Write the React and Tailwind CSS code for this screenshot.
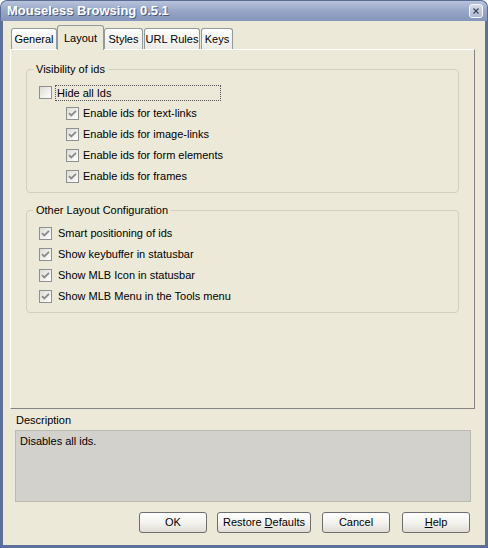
import React from "react";

function CheckBox({ checked }) {
  return (
    <span className="flex h-[13px] w-[13px] shrink-0 items-center justify-center border border-[#8f8f8f] bg-gradient-to-br from-[#dcdcd6] to-white">
      {checked && (
        <svg width="9" height="9" viewBox="0 0 9 9">
          <path d="M1 4.2 L3.3 6.5 L8 1.8" fill="none" stroke="#8a8a8a" strokeWidth="1.8" />
        </svg>
      )}
    </span>
  );
}

function Row({ label, checked, indent, focus }) {
  return (
    <div className={`flex h-[21px] items-center ${indent ? "pl-[39px]" : "pl-[12px]"}`}>
      <CheckBox checked={checked} />
      {focus ? (
        <span className="ml-[3px] w-[166px] border border-dotted border-[#555] pl-[1px] leading-[14px]">{label}</span>
      ) : (
        <span className={indent ? "ml-[4px]" : "ml-[6px]"}>{label}</span>
      )}
    </div>
  );
}

function Group({ title, children, className }) {
  return (
    <fieldset className={`mx-[15px] rounded-[4px] border border-[#d0d0bf] pb-[5px] ${className}`}>
      <legend className="ml-[6px] px-[3px] leading-[13px]">{title}</legend>
      <div className="pt-[6px]">{children}</div>
    </fieldset>
  );
}

function Tab({ label, active, w }) {
  return (
    <div
      className={`flex items-center justify-center rounded-t-[3px] border border-b-0 border-[#919b9c] bg-gradient-to-b from-white to-[#ecebe6] ${w} ${
        active ? "relative z-10 -mx-[1px] -mb-[1px] h-[25px] bg-none bg-[#ece9d8]" : "h-[21px]"
      }`}
    >
      {label}
    </div>
  );
}

function Button({ children, w }) {
  return (
    <div
      className={`flex h-[21px] items-center justify-center rounded-[3px] border border-[#6e6e6e] bg-gradient-to-b from-white via-[#f4f3ee] to-[#dedcd4] ${w}`}
    >
      {children}
    </div>
  );
}

export default function App() {
  return (
    <div className="flex h-[548px] w-[488px] flex-col text-[11px] text-black" style={{ fontFamily: '"Liberation Sans", Arial, sans-serif' }}>
      {/* title bar */}
      <div className="flex h-[21px] shrink-0 items-center justify-between rounded-t-[7px] border border-b-0 border-[#5a6b94] bg-gradient-to-b from-[#b8c3dc] via-[#97a6c7] to-[#8596bb] pl-[6px] pr-[4px]">
        <span className="text-[13px] font-bold text-white [text-shadow:1px_1px_0_#4a5a80]">Mouseless Browsing 0.5.1</span>
        <span className="flex h-[14px] w-[14px] items-center justify-center rounded-[3px] border border-[#f4f6fa] bg-gradient-to-b from-[#d7dde9] to-[#aeb9d1]">
          <svg width="6" height="6" viewBox="0 0 6 6">
            <path d="M0.5 0.5 L5.5 5.5 M5.5 0.5 L0.5 5.5" stroke="#3b4660" strokeWidth="1.2" />
          </svg>
        </span>
      </div>

      {/* body */}
      <div className="flex flex-1 flex-col border-x-[3px] border-b-[3px] border-[#5d6f9b] bg-[#ece9d8]">
        {/* tabs */}
        <div className="ml-[8px] mt-[4px] flex items-end gap-[1px]">
          <Tab label="General" w="w-[46px]" />
          <Tab label="Layout" w="w-[47px]" active />
          <Tab label="Styles" w="w-[39px]" />
          <Tab label="URL Rules" w="w-[56px]" />
          <Tab label="Keys" w="w-[32px]" />
        </div>

        {/* panel */}
        <div className="ml-[7px] flex h-[360px] w-[465px] flex-col border border-b-[#858585] border-l-white border-r-[#858585] border-t-white pt-[13px]">
          <Group title="Visibility of ids">
            <Row label="Hide all Ids" focus />
            <Row label="Enable ids for text-links" checked indent />
            <Row label="Enable ids for image-links" checked indent />
            <Row label="Enable ids for form elements" checked indent />
            <Row label="Enable ids for frames" checked indent />
          </Group>
          <Group title="Other Layout Configuration" className="mt-[11px]">
            <Row label="Smart positioning of ids" checked />
            <Row label="Show keybuffer in statusbar" checked />
            <Row label="Show MLB Icon in statusbar" checked />
            <Row label="Show MLB Menu in the Tools menu" checked />
          </Group>
        </div>

        {/* description */}
        <div className="ml-[13px] mt-[5px] leading-[13px]">Description</div>
        <div className="ml-[12px] mt-[3px] h-[72px] w-[456px] border border-[#bcb9b0] bg-[#d3d1cb] px-[4px] pt-[2px]">
          Disables all ids.
        </div>

        {/* buttons */}
        <div className="mr-[15px] mt-[10px] flex justify-end">
          <Button w="w-[68px]">OK</Button>
          <Button w="w-[94px] ml-[10px]">
            <span>
              Restore <span className="underline">D</span>efaults
            </span>
          </Button>
          <Button w="w-[68px] ml-[11px]">Cancel</Button>
          <Button w="w-[68px] ml-[12px]">
            <span>
              <span className="underline">H</span>elp
            </span>
          </Button>
        </div>
      </div>
    </div>
  );
}
